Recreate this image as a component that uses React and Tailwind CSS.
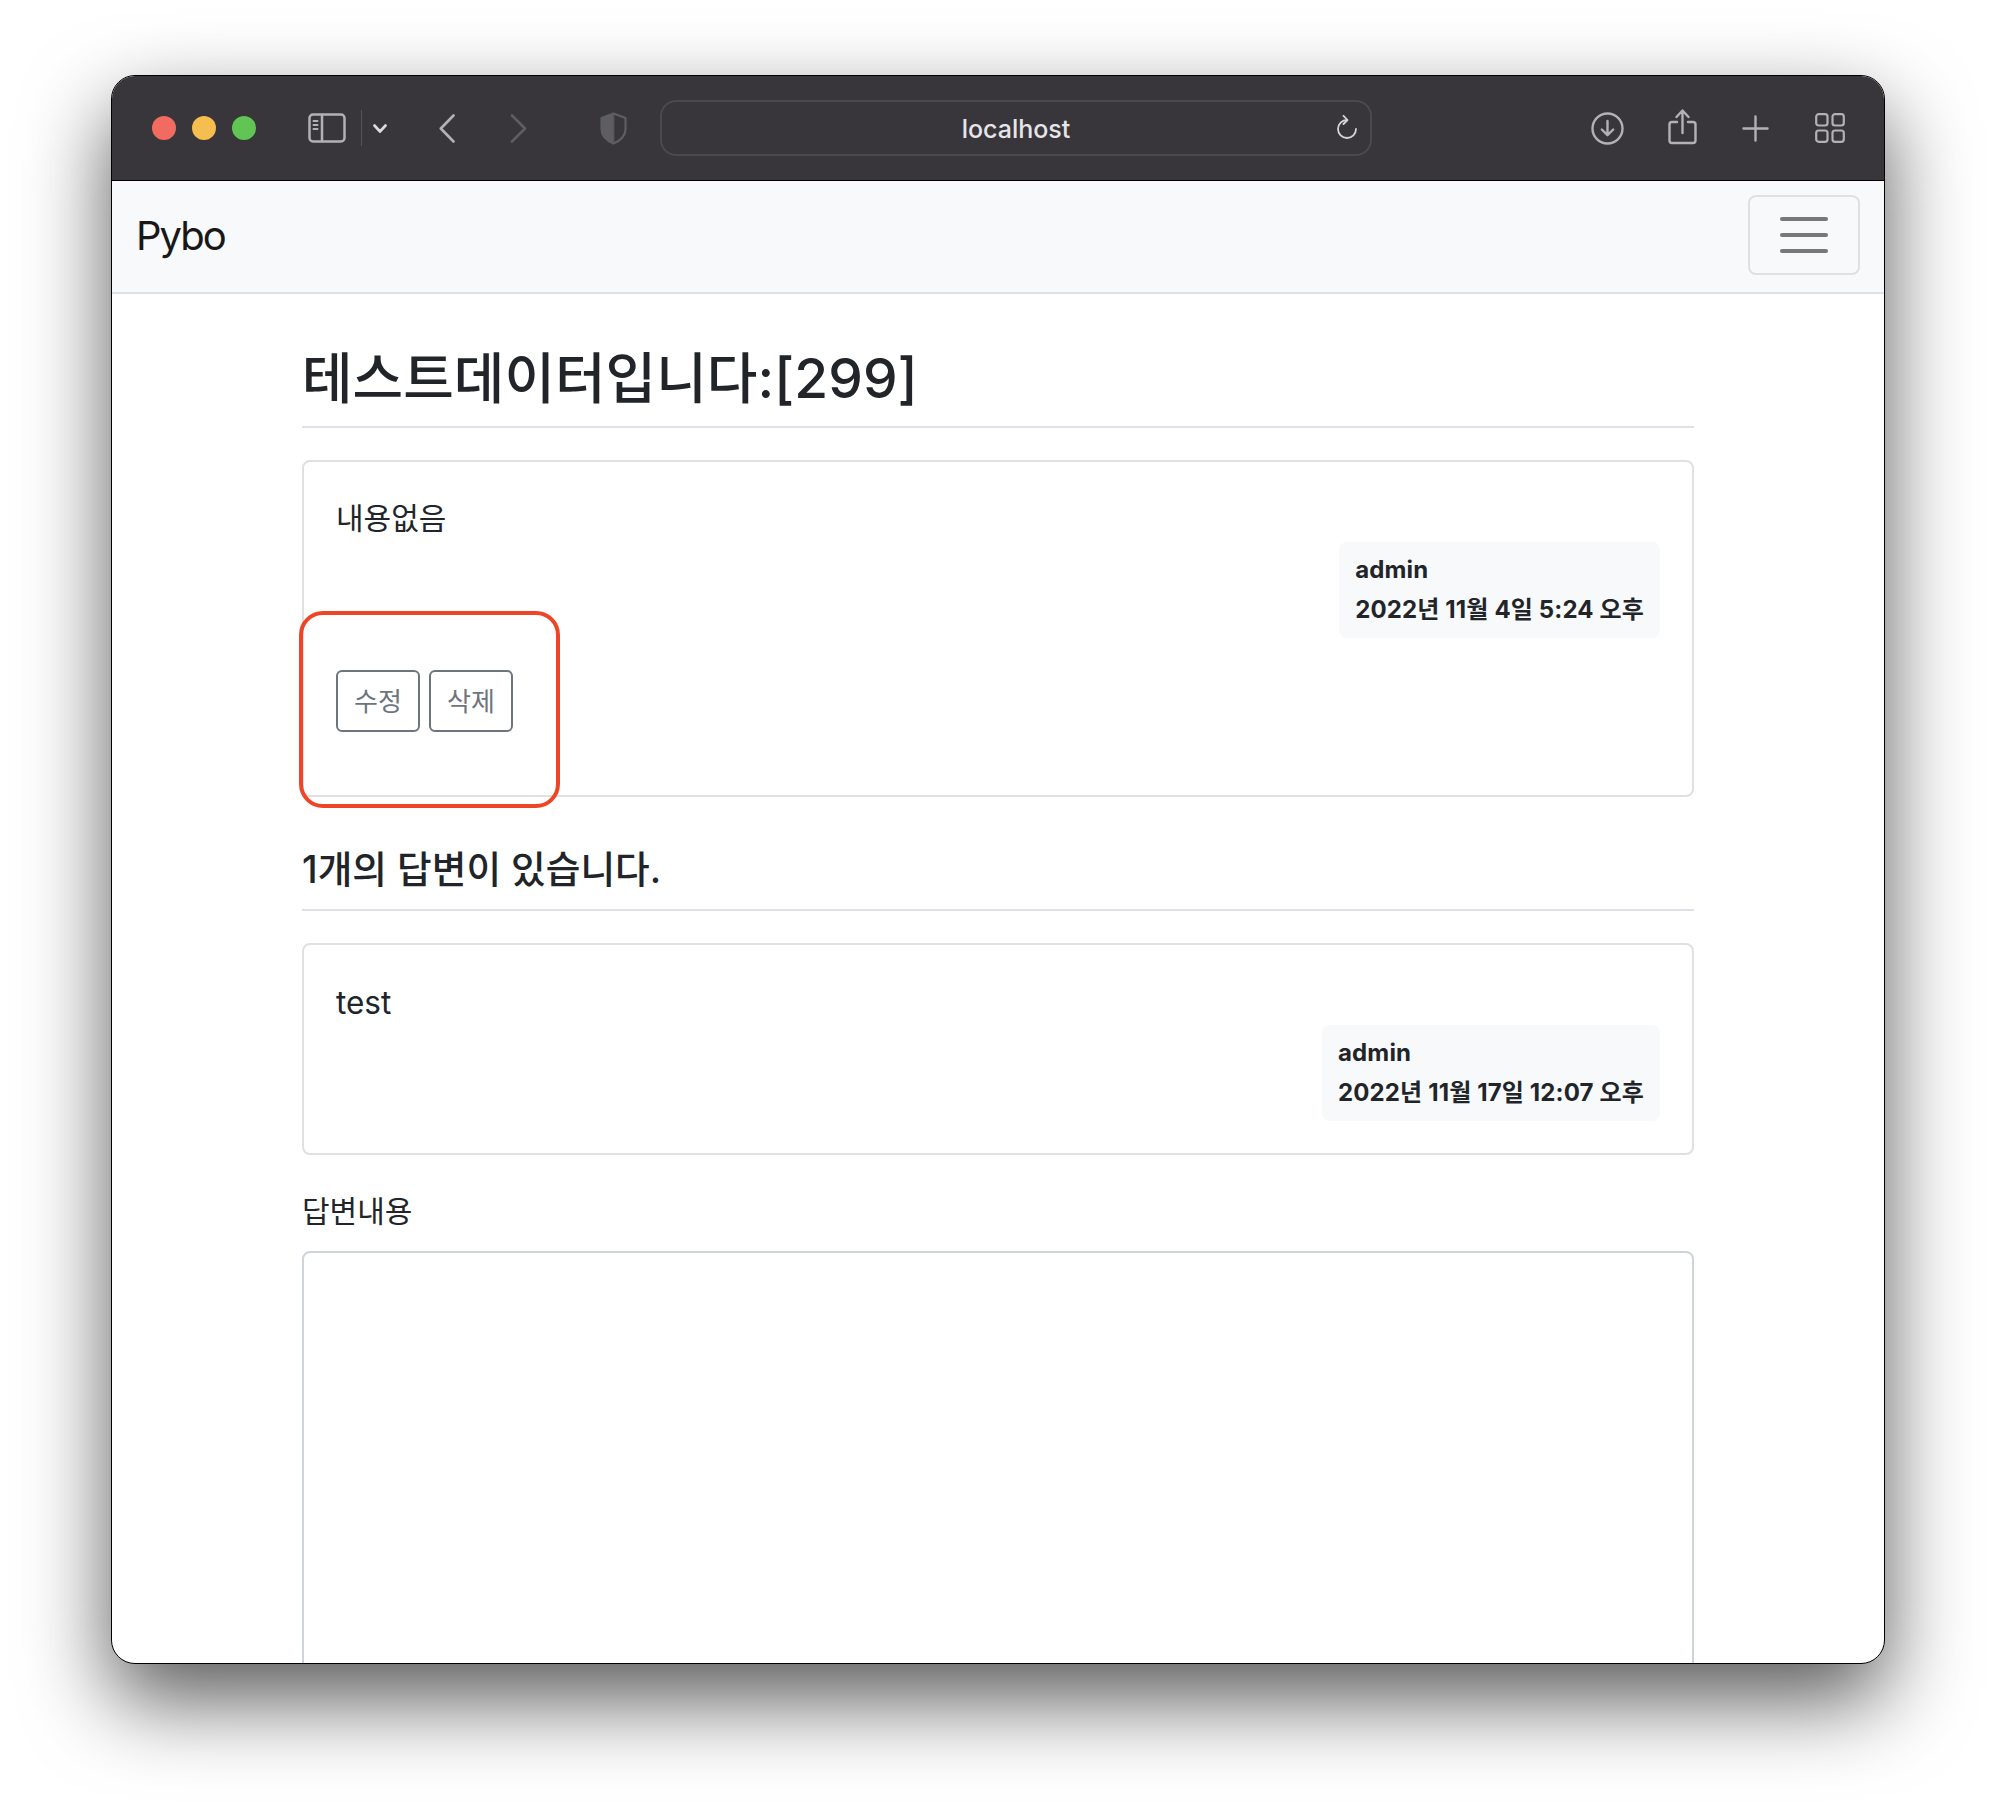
import React from "react";

const font = { fontFamily: 'Inter, "Noto Sans CJK KR", sans-serif' };

function Icon({ w, h, vb, className, children }) {
  return (
    <svg width={w} height={h} viewBox={vb} fill="none" stroke="currentColor" strokeLinecap="round" strokeLinejoin="round" className={className}>
      {children}
    </svg>
  );
}

function Toolbar() {
  return (
    <div className="flex items-center h-[105px] pl-[40px] bg-[#38363b] border-b border-b-black">
      <div className="flex gap-[16px]">
        <div className="w-[24px] h-[24px] rounded-full bg-[#f26b60]" />
        <div className="w-[24px] h-[24px] rounded-full bg-[#f6bd4f]" />
        <div className="w-[24px] h-[24px] rounded-full bg-[#61c554]" />
      </div>
      <Icon w={38} h={30} vb="0 0 38 30" className="ml-[52px] text-[#b3b1b6]" >
        <rect x="1.5" y="1.5" width="35" height="27" rx="3.5" strokeWidth="2.5" />
        <path d="M14 2v26" strokeWidth="2.5" />
        <path d="M5.5 8h4M5.5 12h4M5.5 16h4" strokeWidth="2" />
      </Icon>
      <div className="ml-[15px] w-[1px] h-[36px] bg-[#55535a]" />
      <Icon w={14} h={9} vb="0 0 14 9" className="ml-[11px] text-[#dcdbde]">
        <path d="M1.5 1.5 7 7.5l5.5-6" strokeWidth="2.6" />
      </Icon>
      <Icon w={16} h={29} vb="0 0 16 29" className="ml-[52px] text-[#b3b1b6]">
        <path d="M14.5 1.5 1.8 14.5l12.7 13" strokeWidth="2.6" />
      </Icon>
      <Icon w={17} h={29} vb="0 0 17 29" className="ml-[55px] text-[#5f5d63]">
        <path d="M2 1.5l13 13-13 13" strokeWidth="2.6" />
      </Icon>
      <Icon w={27} h={33} vb="0 0 27 33" className="ml-[73px] text-[#5f5d64]">
        <path d="M13.5 1.5 25.5 6v11c0 7-5 11.500-12 14.500C6.500 28.500 1.500 24 1.500 17V6z" strokeWidth="2.200" />
        <path d="M13.500 1.500 1.500 6v11c0 7 5 11.500 12 14.500z" fill="currentColor" strokeWidth="1" />
      </Icon>
      <div className="ml-[33px] relative flex items-center justify-center w-[712px] h-[56px] rounded-[16px] border-2 border-[#4b494f]">
        <span className="mt-[4px] text-[25px] font-medium text-[#e6e5e8]">localhost</span>
        <Icon w={22} h={25} vb="0 0 22 25" className="absolute right-[12px] top-[13px] text-[#d5d4d7]">
          <path d="M11 5A9 9 0 1 0 20 14" strokeWidth="1.800" />
          <path d="M7.500 0.800 11.500 5 7.500 9" strokeWidth="1.800" />
        </Icon>
      </div>
      <Icon w={33} h={33} vb="0 0 33 33" className="ml-[219px] text-[#b3b1b6]">
        <circle cx="16.500" cy="16.500" r="15" strokeWidth="2.400" />
        <path d="M16.500 9v14M10.800 17.500l5.700 5.700 5.700-5.700" strokeWidth="2.400" />
      </Icon>
      <Icon w={29} h={36} vb="0 0 29 36" className="ml-[44px] mt-[-2px] text-[#b3b1b6]">
        <path d="M9 13H4a2.500 2.500 0 0 0-2.500 2.500v16A2.500 2.500 0 0 0 4 34h21a2.500 2.500 0 0 0 2.500-2.500v-16A2.500 2.500 0 0 0 25 13h-5" strokeWidth="2.400" />
        <path d="M14.500 24V2M8.500 8l6-6.500 6 6.500" strokeWidth="2.400" />
      </Icon>
      <Icon w={27} h={27} vb="0 0 27 27" className="ml-[45px] text-[#b3b1b6]">
        <path d="M13.500 1.500v24M1.500 13.500h24" strokeWidth="2.400" />
      </Icon>
      <Icon w={30} h={30} vb="0 0 30 30" className="ml-[46px] text-[#b3b1b6]">
        <rect x="1.200" y="1.200" width="11.300" height="11.300" rx="2.500" strokeWidth="2.200" />
        <rect x="17.500" y="1.200" width="11.300" height="11.300" rx="2.500" strokeWidth="2.200" />
        <rect x="1.200" y="17.500" width="11.300" height="11.300" rx="2.500" strokeWidth="2.200" />
        <rect x="17.500" y="17.500" width="11.300" height="11.300" rx="2.500" strokeWidth="2.200" />
      </Icon>
    </div>
  );
}

function Navbar() {
  return (
    <div className="flex items-center justify-between h-[113px] pb-[3px] pl-[24px] pr-[24px] bg-[#f8f9fa] border-b-2 border-b-[#dee2e6]">
      <span className="mt-[2px] text-[40px] tracking-[-0.05em] text-[#181818]">Pybo</span>
      <div className="flex flex-col items-center justify-center gap-[12px] w-[112px] h-[80px] rounded-[8px] border-2 border-[#dfe0e1]">
        <div className="w-[48px] h-[4px] rounded-full bg-[#777879]" />
        <div className="w-[48px] h-[4px] rounded-full bg-[#777879]" />
        <div className="w-[48px] h-[4px] rounded-full bg-[#777879]" />
      </div>
    </div>
  );
}

function Meta({ who, when }) {
  return (
    <div className="flex justify-end">
      <div className="flex flex-col justify-center h-[96px] px-[16px] rounded-[8px] bg-[#f8f9fa] text-[24px] tracking-[0.006em] leading-[40px] font-bold text-[#212529]">
        <div>{who}</div>
        <div>{when}</div>
      </div>
    </div>
  );
}

function Card({ text, textSize, children, className }) {
  return (
    <div className={"relative border-2 border-[#dfe0e1] rounded-[8px] px-[32px] pt-[32px] " + className}>
      <div className={"h-[48px] leading-[48px] text-[#212529] " + textSize}>{text}</div>
      {children}
    </div>
  );
}

export default function App() {
  return (
    <div style={font} className="w-[1996px] h-[1812px] pl-[111px] pt-[75px] bg-white overflow-hidden">
      <div className="w-[1774px] h-[1589px] rounded-[24px] overflow-hidden border border-black bg-white shadow-[0_36px_85px_rgba(0,0,0,0.65)]">
        <Toolbar />
        <Navbar />
        <div className="w-[1392px] ml-[190px]">
          <h2 className="h-[134px] pt-[46px] text-[55px] leading-[76px] font-medium text-[#212529] border-b-2 border-b-[#dee2e6]">
            테스트데이터입니다:[299]
          </h2>
          <Card text="내용없음" textSize="text-[30px]" className="mt-[32px] pb-[63px]">
            <Meta who="admin" when="2022년 11월 4일 5:24 오후" />
            <div className="flex gap-[9px] mt-[32px]">
              <button className="w-[84px] h-[62px] rounded-[6px] border-2 border-[#6c757d] text-[26px] text-[#6c757d]">수정</button>
              <button className="w-[84px] h-[62px] rounded-[6px] border-2 border-[#6c757d] text-[26px] text-[#6c757d]">삭제</button>
            </div>
            <div className="absolute left-[-5px] top-[149px] w-[261px] h-[197px] rounded-[24px] border-4 border-[#ee4527]" />
          </Card>
          <h4 className="h-[114px] pt-[45px] text-[37.7px] leading-[54px] font-medium text-[#212529] border-b-2 border-b-[#dee2e6]">
            1개의 답변이 있습니다.
          </h4>
          <Card text="test" textSize="text-[31.5px] pt-[2px]" className="mt-[32px] pb-[32px]">
            <Meta who="admin" when="2022년 11월 17일 12:07 오후" />
          </Card>
          <div className="mt-[36px] h-[60px] text-[30px] leading-[40px] text-[#212529]">답변내용</div>
          <textarea className="block w-full h-[500px] rounded-[8px] border-2 border-[#ced4da] bg-white" />
        </div>
      </div>
    </div>
  );
}
